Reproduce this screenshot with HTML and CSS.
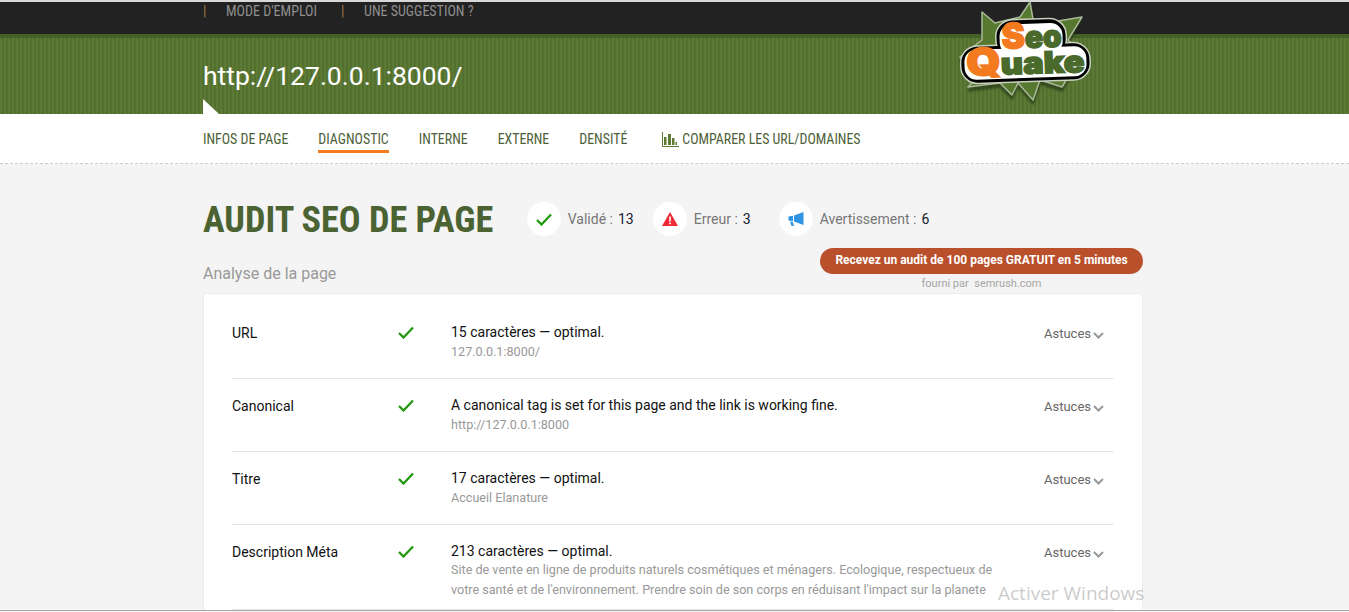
FILE: index.html
```html
<!DOCTYPE html>
<html lang="fr">
<head>
    <meta charset="UTF-8">
    <title>SeoQuake - Diagnostic</title>
    <link rel="stylesheet" href="styles.css">
</head>
<body>
    <div class="topbar">
        <div class="wrap topbar-links">
            <span class="sep">|</span><a>MODE D'EMPLOI</a>
            <span class="sep">|</span><a>UNE SUGGESTION ?</a>
        </div>
    </div>
    <div class="banner">
        <div class="wrap"><h1>http://127.0.0.1:8000/</h1></div>
        <span class="notch"></span>
        <svg class="logo" width="170" height="110" viewBox="0 0 170 110">
            <polygon class="burst" points="90,2 94,25 142,17 128,40 150,59 130,74 122,87 100,80 93,100 78,83 72,95 60,83 28,87 35,80 20,57 42,40 42,12 55,23 80,17"/>
            <g class="logo-word">
                <rect class="halo" x="58" y="21" width="67" height="34" rx="15"/>
                <rect class="halo" x="22" y="46" width="126" height="34" rx="15"/>
                <rect class="blob" x="58" y="21" width="67" height="34" rx="15"/>
                <rect class="blob" x="22" y="46" width="126" height="34" rx="15"/>
                <rect class="blob-fill" x="60" y="24" width="63" height="30" rx="12"/>
                <rect class="blob-fill" x="24" y="48" width="122" height="30" rx="12"/>
                <text class="logo-seo" x="62" y="48" textLength="60" lengthAdjust="spacingAndGlyphs"><tspan class="logo-s">S</tspan>eo</text>
                <text class="logo-quake" x="26" y="74" textLength="118" lengthAdjust="spacingAndGlyphs"><tspan class="logo-s logo-q">Q</tspan>uake</text>
            </g>
        </svg>
    </div>
    <nav class="tabs">
        <div class="wrap tabs-row">
            <a>INFOS DE PAGE</a>
            <a class="active">DIAGNOSTIC</a>
            <a>INTERNE</a>
            <a>EXTERNE</a>
            <a>DENSITÉ</a>
            <a class="compare">
                <svg width="17" height="15" viewBox="0 0 17 15"><path d="M0.5 0v14.5H17" fill="none" stroke="#5c7a34"/><path d="M2 5h2.500v8H2zM6 2h3v11H6zM10 6h2.500v7H10zM13.500 10H15v3h-1.500z" fill="#5c7a34"/></svg>
                COMPARER LES URL/DOMAINES
            </a>
        </div>
    </nav>
    <main class="wrap">
        <div class="audit-head">
            <h2>AUDIT SEO DE PAGE</h2>
            <div class="stat">
                <span class="stat-icon"><svg width="16" height="13" viewBox="0 0 16 13"><path class="check" d="M1 7l4.500 4.500L15 1.500"/></svg></span>
                <span class="stat-label">Validé :</span><b>13</b>
            </div>
            <div class="stat">
                <span class="stat-icon"><svg width="16" height="14" viewBox="0 0 16 14"><path d="M8 0l8 14H0z" fill="#ee2b36"/><path d="M7.200 4.500h1.600v5H7.200zM7.200 10.500h1.600v1.700H7.200z" fill="#fff"/></svg></span>
                <span class="stat-label">Erreur :</span><b>3</b>
            </div>
            <div class="stat">
                <span class="stat-icon"><svg width="16" height="16" viewBox="0 0 16 16"><path d="M15.500 1v13L6 10.500V4.500z" fill="#2f93e2"/><path d="M0.500 5.500L5 4.700v5.600L0.500 9.500zM2 10.500l3 .7 1 3.800-2.600-.2z" fill="#2f93e2"/></svg></span>
                <span class="stat-label">Avertissement :</span><b>6</b>
            </div>
        </div>
        <div class="sub-head">
            <h3>Analyse de la page</h3>
            <div class="promo">
                <a class="promo-btn">Recevez un audit de 100 pages GRATUIT en 5 minutes</a>
                <span class="promo-by">fourni par&nbsp; semrush.com</span>
            </div>
        </div>
        <section class="card">
            <div class="row">
                <div class="row-name">URL</div>
                <div class="row-state"><svg width="16" height="13" viewBox="0 0 16 13"><path class="check" d="M1 7l4.500 4.500L15 1.500"/></svg></div>
                <div class="row-body">
                    <p>15 caractères — optimal.</p>
                    <small>127.0.0.1:8000/</small>
                </div>
                <a class="tips">Astuces<svg width="11" height="7" viewBox="0 0 11 7"><path d="M1 1l4.500 4.500L10 1"/></svg></a>
            </div>
            <div class="row">
                <div class="row-name">Canonical</div>
                <div class="row-state"><svg width="16" height="13" viewBox="0 0 16 13"><path class="check" d="M1 7l4.500 4.500L15 1.500"/></svg></div>
                <div class="row-body">
                    <p>A canonical tag is set for this page and the link is working fine.</p>
                    <small>http://127.0.0.1:8000</small>
                </div>
                <a class="tips">Astuces<svg width="11" height="7" viewBox="0 0 11 7"><path d="M1 1l4.500 4.500L10 1"/></svg></a>
            </div>
            <div class="row">
                <div class="row-name">Titre</div>
                <div class="row-state"><svg width="16" height="13" viewBox="0 0 16 13"><path class="check" d="M1 7l4.500 4.500L15 1.500"/></svg></div>
                <div class="row-body">
                    <p>17 caractères — optimal.</p>
                    <small>Accueil Elanature</small>
                </div>
                <a class="tips">Astuces<svg width="11" height="7" viewBox="0 0 11 7"><path d="M1 1l4.500 4.500L10 1"/></svg></a>
            </div>
            <div class="row row-long">
                <div class="row-name">Description Méta</div>
                <div class="row-state"><svg width="16" height="13" viewBox="0 0 16 13"><path class="check" d="M1 7l4.500 4.500L15 1.500"/></svg></div>
                <div class="row-body">
                    <p>213 caractères — optimal.</p>
                    <small>Site de vente en ligne de produits naturels cosmétiques et ménagers. Ecologique, respectueux de votre santé et de l'environnement. Prendre soin de son corps en réduisant l'impact sur la planete</small>
                </div>
                <a class="tips">Astuces<svg width="11" height="7" viewBox="0 0 11 7"><path d="M1 1l4.500 4.500L10 1"/></svg></a>
            </div>
        </section>
    </main>
    <div class="watermark">Activer Windows</div>
    <div class="window-edge"></div>
</body>
</html>
```
FILE: styles.css
```css
html, body {
    margin: 0;
    height: 612px;
    overflow: hidden;
}

body {
    font-family: 'Roboto', sans-serif;
    background-color: #f4f4f4;
    color: #111;
    position: relative;
}

.wrap {
    width: 940px;
    margin-left: 203px;
}

.topbar {
    height: 32px;
    background-color: #222;
    border-top: 2px solid #d8d8d8;
}

.topbar-links {
    display: flex;
    font-size: 14px;
    line-height: 18px;
    color: #8f8f8f;
    font-stretch: condensed;
}

.topbar-links .sep {
    color: #9c7a42;
    width: 23px;
}

.topbar-links a {
    margin-right: 24px;
}

.banner {
    height: 80px;
    position: relative;
    background-color: #5c7a34;
    background-image: repeating-linear-gradient(90deg, #5c7a34 0, #5c7a34 2px, #547030 2px, #547030 4px);
    box-shadow: inset 0 4px 0 #46602a;
}

.banner h1 {
    margin: 0;
    padding-top: 25px;
    font-size: 26.500px;
    line-height: 34px;
    font-weight: 400;
    color: #fff;
}

.notch {
    position: absolute;
    left: 203px;
    bottom: 0;
    width: 0;
    height: 0;
    border-left: 16px solid #fff;
    border-top: 15px solid transparent;
}

.logo {
    position: absolute;
    left: 940px;
    top: -34px;
}

.burst {
    fill: #56782f;
    stroke: #a9b99a;
    stroke-width: 1.500;
    stroke-linejoin: round;
    filter: drop-shadow(0 4px 1px rgba(30, 45, 15, 0.6));
}

.logo-word {
    transform: rotate(-2deg);
    transform-origin: 85px 50px;
}

.halo {
    fill: #c9d2c0;
    stroke: #c9d2c0;
    stroke-width: 5;
}

.blob {
    fill: #000;
    stroke: #000;
    stroke-width: 2;
}

.blob-fill {
    fill: #fff;
}

.logo-seo,
.logo-quake {
    font-family: 'Inter', sans-serif;
    font-weight: 900;
    fill: #4a6a2c;
    stroke: #4a6a2c;
    stroke-width: 1.500;
}

.logo-seo {
    font-size: 30px;
}

.logo-quake {
    font-size: 30px;
}

.logo-s {
    fill: #f47a20;
    stroke: #f47a20;
    font-size: 35px;
}

.logo-q {
    font-size: 38px;
}

.tabs {
    height: 49px;
    background-color: #fff;
    border-bottom: 1px dashed #ccc;
}

.tabs-row {
    display: flex;
    font-size: 13.900px;
    font-stretch: condensed;
    color: #4d6138;
    line-height: 20px;
    padding-top: 15px;
}

.tabs-row a {
    margin-right: 30px;
    height: 21px;
}

.tabs-row .active {
    border-bottom: 3px solid #f47a20;
}

.tabs-row .compare {
    margin-left: 5px;
    display: flex;
    align-items: center;
    height: 20px;
    gap: 3px;
}

.audit-head {
    display: flex;
    align-items: center;
    padding-top: 31px;
    height: 48px;
}

.audit-head h2 {
    margin: 0 33.500px 0 0;
    font-size: 36.200px;
    font-weight: 700;
    font-stretch: condensed;
    color: #4b6233;
    white-space: nowrap;
}

.stat {
    display: flex;
    align-items: center;
    margin-right: 19px;
    font-size: 14px;
}

.stat:nth-child(3) {
    margin-right: 28px;
}

.stat-icon {
    width: 34px;
    height: 34px;
    border-radius: 50%;
    background-color: #fff;
    display: flex;
    align-items: center;
    justify-content: center;
    margin-right: 7px;
}

.stat-label {
    color: #777;
    margin-right: 5px;
}

.stat b {
    font-weight: 400;
    color: #16212e;
}

.check {
    fill: none;
    stroke: #22980f;
    stroke-width: 2.300;
}

.sub-head {
    display: flex;
    justify-content: space-between;
    height: 45px;
    padding-top: 5px;
}

.sub-head h3 {
    margin: 16px 0 0;
    font-size: 16px;
    line-height: 20px;
    font-weight: 400;
    color: #999;
}

.promo {
    display: flex;
    flex-direction: column;
    align-items: center;
}

.promo-btn {
    width: 323px;
    height: 26px;
    line-height: 24px;
    border-radius: 13px;
    background-color: #b94f2b;
    color: #fff;
    font-size: 12px;
    font-weight: 700;
    text-align: center;
}

.promo-by {
    font-size: 11px;
    line-height: 14px;
    margin-top: 3px;
    color: #a5a5a5;
}

.card {
    background-color: #fff;
    border: 1px solid #ececec;
    border-radius: 3px;
    padding: 12px 28px 0;
}

.row {
    display: flex;
    align-items: flex-start;
    padding: 17px 0 16px;
    border-bottom: 1px solid #e6e6e6;
    font-size: 14px;
    line-height: 19px;
}

.row-long {
    padding-bottom: 9px;
}

.row-name {
    width: 166px;
    margin-top: 1px;
}

.row-state {
    width: 53px;
    margin-top: 2px;
}

.row-body {
    width: 545px;
    flex: none;
}

.row-body p {
    margin: 0;
}

.row-body small {
    display: block;
    font-size: 12.600px;
    line-height: 20px;
    color: #999;
}

.row-long small {
    margin-top: -1px;
}

.tips {
    margin-left: auto;
    margin-right: 10px;
    margin-top: 1px;
    font-size: 13px;
    color: #666;
    display: flex;
    align-items: center;
    gap: 2px;
}

.tips svg {
    fill: none;
    stroke: #999;
    stroke-width: 2;
    margin-top: 3px;
}

.watermark {
    position: absolute;
    left: 998px;
    top: 580px;
    font-family: 'Open Sans', sans-serif;
    font-size: 19px;
    color: rgba(150, 150, 150, 0.5);
}

.window-edge {
    position: absolute;
    left: 0;
    right: 0;
    bottom: 1px;
    height: 1px;
    background-color: #a8a8a8;
}
```
